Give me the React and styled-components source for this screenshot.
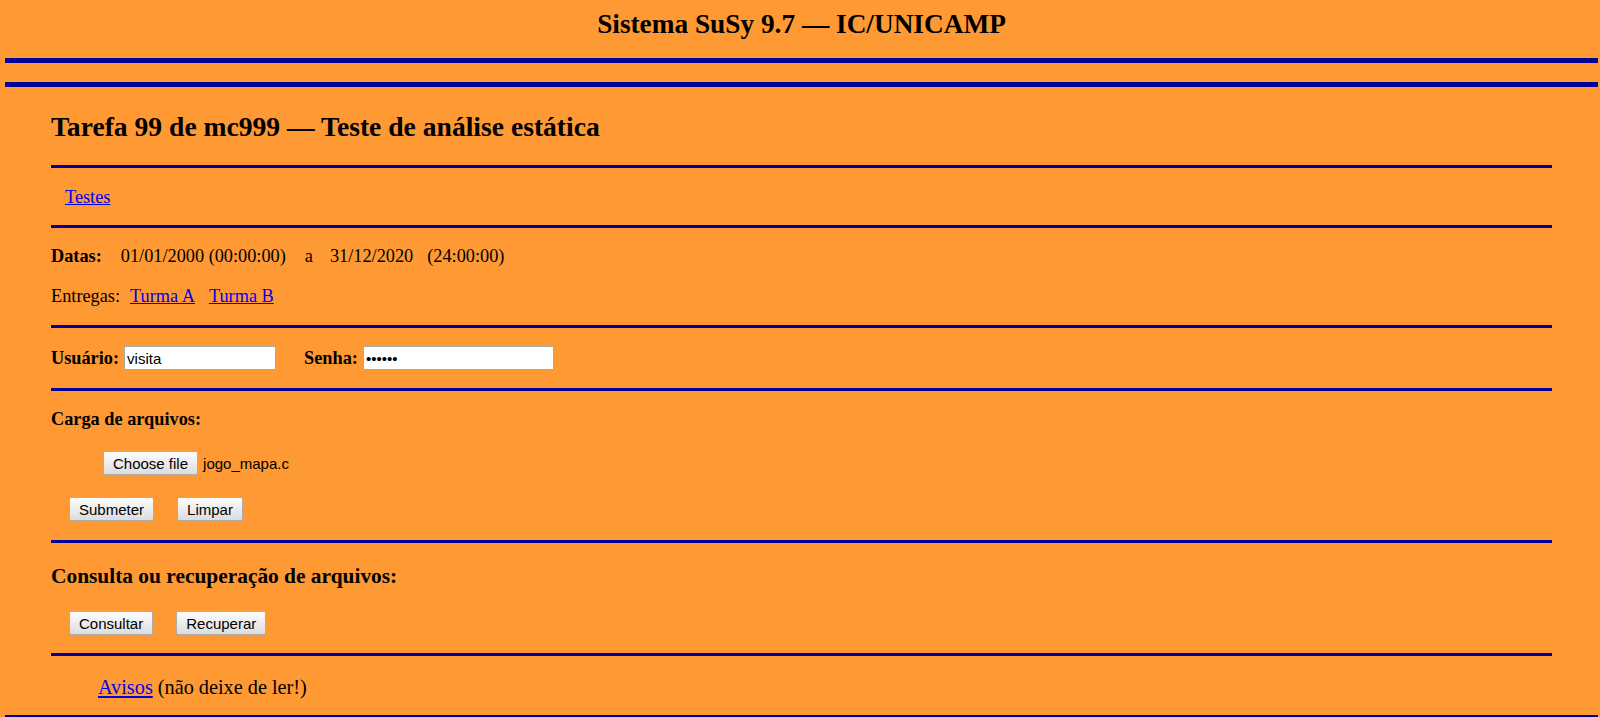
import React from "react";
import styled, { createGlobalStyle } from "styled-components";

const GlobalStyle = createGlobalStyle`
  body {
    margin: 0;
    background: #ff9933;
    color: #000;
    font-family: "Liberation Serif", "Times New Roman", serif;
    font-size: 18.3px;
  }
`;

function App() {
  return (
    <>
      <GlobalStyle />
      <Page>
        <Banner>Sistema SuSy 9.7 — IC/UNICAMP</Banner>
        <ThickRule $top={19} />
        <ThickRule $top={19} />

        <Content>
          <Title>Tarefa 99 de mc999 — Teste de análise estática</Title>
          <Rule $top={23} />

          <NavRow>
            <Link href="#">Testes</Link>
          </NavRow>
          <Rule $top={17} />

          <Line $top={18}>
            <b>Datas:</b>
            <Spacer $w={19} />
            01/01/2000 (00:00:00)
            <Spacer $w={19} />a<Spacer $w={17} />
            31/12/2020
            <Spacer $w={14} />
            (24:00:00)
          </Line>
          <Line $top={19}>
            Entregas:
            <Spacer $w={10} />
            <Link href="#">Turma A</Link>
            <Spacer $w={14} />
            <Link href="#">Turma B</Link>
          </Line>
          <Rule $top={18} />

          <LoginRow>
            <FieldLabel htmlFor="user">Usuário:</FieldLabel>
            <TextInput id="user" type="text" defaultValue="visita" $w={152} />
            <FieldLabel htmlFor="pass" $gap={28}>
              Senha:
            </FieldLabel>
            <TextInput id="pass" type="password" defaultValue="visita" $w={191} />
          </LoginRow>
          <Rule $top={18} />

          <SubHead>Carga de arquivos:</SubHead>
          <FileRow>
            <FilePick>
              Choose file
              <HiddenFile type="file" />
            </FilePick>
            <FileName>jogo_mapa.c</FileName>
          </FileRow>
          <ButtonRow $top={22}>
            <Button>Submeter</Button>
            <Button>Limpar</Button>
          </ButtonRow>
          <Rule $top={19} />

          <SectionTitle>Consulta ou recuperação de arquivos:</SectionTitle>
          <ButtonRow $top={23}>
            <Button>Consultar</Button>
            <Button>Recuperar</Button>
          </ButtonRow>
          <Rule $top={18} />

          <Notice>
            <Link href="#">Avisos</Link> (não deixe de ler!)
          </Notice>
        </Content>

        <ThickRule $top={16} />
      </Page>
    </>
  );
}

const Page = styled.div`
  padding: 0 2px 0 5px;
`;

const Banner = styled.h1`
  margin: 0;
  padding-top: 9px;
  font-size: 27.3px;
  line-height: 30px;
  font-weight: bold;
  text-align: center;
`;

const ThickRule = styled.hr`
  border: 0;
  height: 5px;
  background: #000099;
  margin: ${(p) => p.$top}px 0 0;
`;

const Content = styled.main`
  margin: 0 46px;
`;

const Title = styled.h2`
  margin: 25px 0 0;
  font-size: 27.6px;
  line-height: 30px;
  font-weight: bold;
`;

const Rule = styled.hr`
  border: 0;
  height: 3px;
  background: #000099;
  margin: ${(p) => p.$top}px 0 0;
`;

const Link = styled.a`
  color: #0000ee;
  text-decoration: underline;
`;

const NavRow = styled.div`
  margin-top: 19px;
  padding-left: 14px;
  line-height: 21px;
`;

const Line = styled.p`
  margin: ${(p) => p.$top}px 0 0;
  line-height: 21px;
`;

const Spacer = styled.span`
  display: inline-block;
  width: ${(p) => p.$w}px;
`;

const LoginRow = styled.div`
  display: flex;
  align-items: baseline;
  margin-top: 18px;
`;

const FieldLabel = styled.label`
  font-weight: bold;
  line-height: 21px;
  margin: 0 5px 0 ${(p) => p.$gap || 0}px;
`;

const TextInput = styled.input`
  box-sizing: border-box;
  width: ${(p) => p.$w}px;
  height: 24px;
  padding: 1px 2px;
  border: 1px solid #a9a9a9;
  background: #fff;
  font: 15px "Liberation Sans", Arial, sans-serif;
  color: #000;
  outline: none;
`;

const SubHead = styled.h4`
  margin: 18px 0 0;
  font-size: 18.3px;
  line-height: 21px;
  font-weight: bold;
`;

const FileRow = styled.div`
  display: flex;
  align-items: center;
  gap: 5px;
  margin-top: 21px;
  padding-left: 52px;
`;

const Button = styled.button`
  box-sizing: border-box;
  height: 24px;
  padding: 0 9px;
  border: 1px solid #adadad;
  border-radius: 2px;
  background: linear-gradient(#fdfdfd, #dcdcdc);
  font: 15px "Liberation Sans", Arial, sans-serif;
  color: #000;
  cursor: pointer;
`;

const FilePick = styled(Button).attrs({ as: "label" })`
  display: inline-flex;
  align-items: center;
`;

const HiddenFile = styled.input`
  display: none;
`;

const FileName = styled.span`
  font: 15px "Liberation Sans", Arial, sans-serif;
`;

const ButtonRow = styled.div`
  display: flex;
  gap: 23px;
  padding-left: 18px;
  margin-top: ${(p) => p.$top}px;
`;

const SectionTitle = styled.h3`
  margin: 21px 0 0;
  font-size: 21.4px;
  line-height: 24px;
  font-weight: bold;
`;

const Notice = styled.p`
  margin: 19px 0 0;
  padding-left: 47px;
  font-size: 20.25px;
  line-height: 24px;
`;

export default App;
